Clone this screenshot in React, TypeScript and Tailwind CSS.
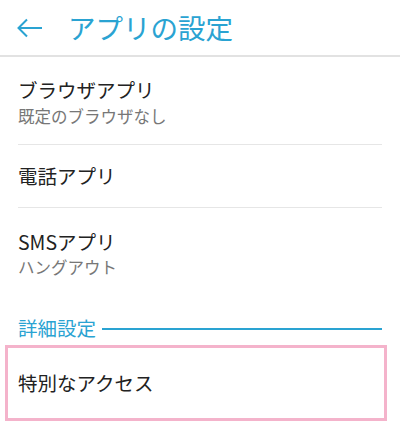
import React from 'react';

const font = { fontFamily: '"Noto Sans CJK JP", "Noto Sans", sans-serif' };

function BackArrow() {
    return (
        <svg width="26" height="20" viewBox="0 0 26 20" fill="none" stroke="#2aa3d2" strokeWidth="2">
            <path d="M25 10H2" />
            <path d="M10 1.5L1.5 10L10 18.5" />
        </svg>
    );
}

export default function App() {
    return (
        <div className="w-[400px] h-[431px] bg-white overflow-hidden" style={font}>
            <div className="h-[57px] flex items-center pl-[17px] bg-white border-b-2 border-[#e2e2e2]">
                <BackArrow />
                <span className="ml-[25px] text-[27.5px] text-[#2aa3d2] leading-none">アプリの設定</span>
            </div>

            <div className="mx-[18px]">
                <div className="h-[88px] flex flex-col justify-center border-b border-[#e6e6e6] pt-[2px]">
                    <div className="text-[19.5px] text-[#222] leading-[26px]">ブラウザアプリ</div>
                    <div className="text-[16.5px] text-[#777] leading-[22px] mt-[2px]">既定のブラウザなし</div>
                </div>
                <div className="h-[63px] flex items-center border-b border-[#e6e6e6]">
                    <div className="text-[19.5px] text-[#222] leading-[26px]">電話アプリ</div>
                </div>
                <div className="h-[90px] flex flex-col justify-center">
                    <div className="text-[19.5px] text-[#222] leading-[26px]">SMSアプリ</div>
                    <div className="text-[16.5px] text-[#777] leading-[22px] mt-[1px]">ハングアウト</div>
                </div>
                <div className="flex items-center gap-[6px] h-[22px] mt-[19px]">
                    <span className="text-[19.5px] text-[#2aa3d2] leading-none">詳細設定</span>
                    <div className="flex-1 h-[1.5px] bg-[#2aa3d2] mt-[2px]" />
                </div>
            </div>

            <div className="ml-[5px] mr-[13px] mt-[6px] h-[76px] border-[3px] border-[#f4b3cb] flex items-center pl-[10px]">
                <span className="text-[19.5px] text-[#222] leading-none">特別なアクセス</span>
            </div>
        </div>
    );
}
